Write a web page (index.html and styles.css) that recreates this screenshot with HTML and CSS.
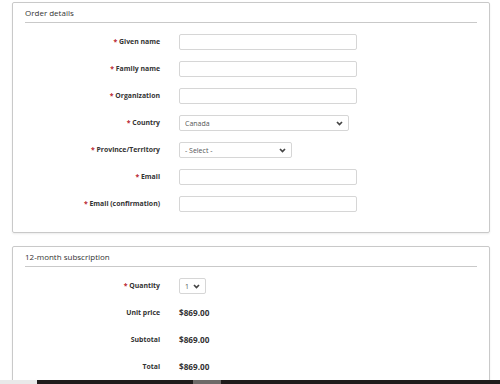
FILE: index.html
```html
<!doctype html>
<html lang="en">
<head>
    <meta charset="UTF-8">
    <title>Order</title>
    <link rel="stylesheet" href="styles.css">
</head>
<body>
<div class="page">
    <!-- order details -->
    <div class="panel">
        <div class="panel-title">Order details</div>
        <div class="form">
            <label class="label"><span class="req">*</span> Given name</label>
            <input class="field" type="text">
            <label class="label"><span class="req">*</span> Family name</label>
            <input class="field" type="text">
            <label class="label"><span class="req">*</span> Organization</label>
            <input class="field" type="text">
            <label class="label"><span class="req">*</span> Country</label>
            <div class="select country">
                <select><option>Canada</option></select>
                <svg class="chev" width="7" height="5" viewBox="0 0 7 5"><path d="M1 1l2.5 2.5L6 1" fill="none" stroke="#444" stroke-width="1.7"/></svg>
            </div>
            <label class="label"><span class="req">*</span> Province/Territory</label>
            <div class="select province">
                <select><option>- Select -</option></select>
                <svg class="chev" width="7" height="5" viewBox="0 0 7 5"><path d="M1 1l2.5 2.5L6 1" fill="none" stroke="#444" stroke-width="1.7"/></svg>
            </div>
            <label class="label"><span class="req">*</span> Email</label>
            <input class="field" type="text">
            <label class="label"><span class="req">*</span> Email (confirmation)</label>
            <input class="field" type="text">
        </div>
    </div>

    <!-- subscription -->
    <div class="panel">
        <div class="panel-title">12-month subscription</div>
        <div class="form">
            <label class="label"><span class="req">*</span> Quantity</label>
            <div class="select qty">
                <select><option>1</option></select>
                <svg class="chev" width="7" height="5" viewBox="0 0 7 5"><path d="M1 1l2.5 2.5L6 1" fill="none" stroke="#444" stroke-width="1.7"/></svg>
            </div>
            <div class="label">Unit price</div>
            <div class="value">$869.00</div>
            <div class="label">Subtotal</div>
            <div class="value">$869.00</div>
            <div class="label">Total</div>
            <div class="value">$869.00</div>
        </div>
    </div>
</div>

<div class="taskbar">
    <span class="tb-left"></span>
    <span class="tb-dark"></span>
    <span class="tb-mid"></span>
    <span class="tb-dark tb-rest"></span>
</div>
</body>
</html>
```

FILE: styles.css
```css
* {
    margin: 0;
    padding: 0;
    box-sizing: border-box;
}

body {
    background: #fff;
    font-family: "Open Sans", "Liberation Sans", sans-serif;
    color: #333;
}

.page {
    padding: 2px 10px 0 12px;
}

.panel {
    border: 1px solid #c9c9c9;
    border-radius: 2px;
    box-shadow: 0 1px 2px rgba(0, 0, 0, .08);
    padding: 0 12px 20px;
    margin-bottom: 13px;
}

.panel-title {
    font-size: 8px;
    line-height: 19px;
    color: #333;
    border-bottom: 1px solid #c9c9c9;
}

.form {
    display: grid;
    grid-template-columns: 135px 1fr;
    column-gap: 19px;
    row-gap: 11px;
    align-items: center;
    padding-top: 11px;
}

.label {
    font-size: 6.9px;
    font-weight: 700;
    text-align: right;
    color: #333;
    line-height: 16px;
}

.req {
    color: #b8232f;
}

.field {
    display: block;
    width: 178px;
    height: 16px;
    border: 1px solid #d6d6d6;
    border-radius: 2px;
    background: #fff;
    outline: none;
}

.select {
    position: relative;
    height: 16px;
}

.select select {
    -webkit-appearance: none;
    appearance: none;
    display: block;
    width: 100%;
    height: 16px;
    border: 1px solid #d6d6d6;
    border-radius: 2px;
    background: #fff;
    font-family: inherit;
    font-size: 7px;
    color: #555;
    padding-left: 5px;
    outline: none;
}

.country {
    width: 170px;
}

.province {
    width: 113px;
}

.qty {
    width: 27px;
}

.chev {
    position: absolute;
    right: 6px;
    top: 6px;
}

.value {
    font-size: 8.2px;
    font-weight: 700;
    color: #333;
    line-height: 16px;
}

.taskbar {
    position: fixed;
    left: 0;
    right: 0;
    bottom: 0;
    height: 4px;
    display: flex;
}

.tb-left {
    width: 37px;
    background: #e9e9e9;
}

.tb-dark {
    width: 156px;
    background: #1f1c1b;
}

.tb-mid {
    width: 28px;
    background: #6e6a68;
}

.tb-rest {
    flex: 1;
}
```
